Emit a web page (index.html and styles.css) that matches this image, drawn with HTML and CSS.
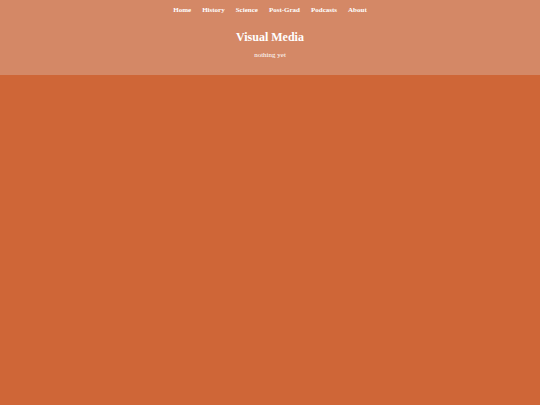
FILE: index.html
```html
<!DOCTYPE html>
<html>
<head>
<meta charset="utf-8">
<link rel="stylesheet" href="styles.css">
</head>
<body>
<header class="site-header">
  <nav class="nav">
    <a href="#">Home</a>
    <a href="#">History</a>
    <a href="#">Science</a>
    <a href="#">Post-Grad</a>
    <a href="#">Podcasts</a>
    <a href="#">About</a>
  </nav>
  <h1 class="title">Visual Media</h1>
  <p class="tagline">nothing yet</p>
</header>
<main class="content"></main>
</body>
</html>
```
FILE: styles.css
```css
html, body {
  margin: 0;
  padding: 0;
  height: 100%;
}
body {
  background: #cf6637;
  font-family: "Liberation Serif", "Times New Roman", serif;
  color: #fff;
}
.site-header {
  background: #d48866;
  height: 75px;
  box-sizing: border-box;
  padding-top: 6px;
  display: flex;
  flex-direction: column;
  align-items: center;
}
.nav {
  display: flex;
  gap: 11px;
  font-size: 7px;
  font-weight: bold;
  line-height: 8px;
}
.nav a {
  color: #fff;
  text-decoration: none;
}
.title {
  margin: 16px 0 0;
  font-size: 12px;
  font-weight: bold;
  line-height: 14px;
}
.tagline {
  margin: 7px 0 0;
  font-size: 7px;
  line-height: 8px;
}
```
